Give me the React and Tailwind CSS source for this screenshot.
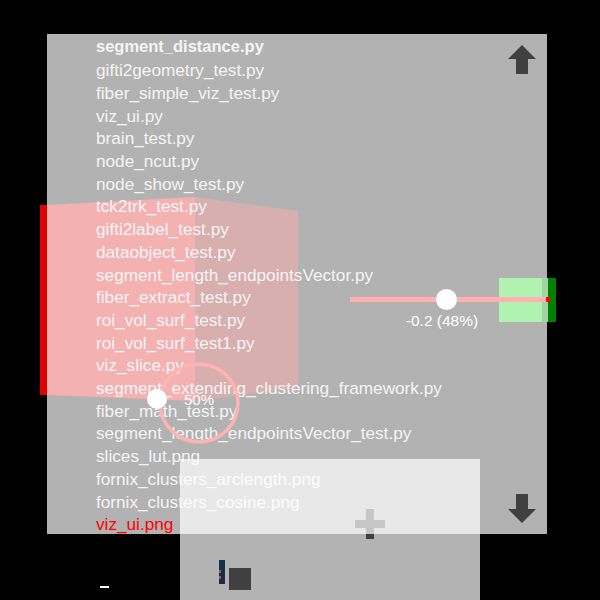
import React from 'react';

const files = [
  'gifti2geometry_test.py',
  'fiber_simple_viz_test.py',
  'viz_ui.py',
  'brain_test.py',
  'node_ncut.py',
  'node_show_test.py',
  'tck2trk_test.py',
  'gifti2label_test.py',
  'dataobject_test.py',
  'segment_length_endpointsVector.py',
  'fiber_extract_test.py',
  'roi_vol_surf_test.py',
  'roi_vol_surf_test1.py',
  'viz_slice.py',
  'segment_extending_clustering_framework.py',
  'fiber_math_test.py',
  'segment_length_endpointsVector_test.py',
  'slices_lut.png',
  'fornix_clusters_arclength.png',
  'fornix_clusters_cosine.png',
];

/** Perspective cube seen from the front, drawn under the file names. */
function Cube() {
  return (
    <svg className="absolute left-[-7px] top-[162px]" width="260" height="212" viewBox="40 196 260 212">
      <polygon points="40,205 47,205 47,395 40,395" fill="#e00000" />
      <polygon points="47,205 195,197 195,401 47,395" fill="#f4b1b1" />
      <polygon points="195,197 298,211 298,388 195,401" fill="#d7afaf" />
    </svg>
  );
}

function ArrowUp() {
  return (
    <svg width="28" height="29" viewBox="0 0 28 29">
      <polygon points="14,0 28,14 20,14 20,29 8,29 8,14 0,14" fill="#404040" />
    </svg>
  );
}

function ArrowDown() {
  return (
    <svg width="28" height="29" viewBox="0 0 28 29">
      <polygon points="8,0 20,0 20,15 28,15 14,29 0,15 8,15" fill="#404040" />
    </svg>
  );
}

export default function App() {
  return (
    <div className="relative w-[600px] h-[600px] overflow-hidden bg-black font-['Liberation_Sans',Arial,sans-serif]">
      <div className="relative ml-[47px] pt-[34px]">
        <div className="relative w-[500px] h-[500px] bg-[#b2b2b2] flex">
          <Cube />
          <ul className="relative z-10 pl-[49px] pt-[2.5px] flex-1 text-[17.2px] leading-[22.7px] text-[#f5f5f5] whitespace-nowrap">
            <li className="relative top-[-1.5px] font-bold text-[16.5px]">segment_distance.py</li>
            {files.map((f) => (
              <li key={f}>{f}</li>
            ))}
            <li className="text-[#ff0000]">viz_ui.png</li>
          </ul>
          <div className="relative z-10 flex flex-col justify-between pt-[11px] pb-[11px] pr-[11px]">
            <ArrowUp />
            <ArrowDown />
          </div>
        </div>
      </div>

      {/* ring slider */}
      <div className="absolute left-[158px] top-[362px] w-[82px] h-[82px] z-20">
        <svg width="82" height="82" viewBox="0 0 82 82" className="absolute inset-0 overflow-visible">
          <circle cx="41" cy="41" r="39" fill="none" stroke="#ffb3b3" strokeWidth="3.5" />
          <circle cx="-1" cy="37" r="10" fill="#ffffff" />
        </svg>
        <span className="absolute left-0 right-0 top-[29px] text-center text-[15px] leading-[18px] text-white">50%</span>
      </div>

      {/* line slider with green box */}
      <div className="absolute left-[499px] top-[278px] w-[57px] h-[44px] flex z-20">
        <div className="w-[43px] bg-[#b0f2b0]" />
        <div className="w-[6px] bg-[#a3d2a3]" />
        <div className="w-[8px] bg-[#008000]" />
      </div>
      <div className="absolute left-[350px] top-[297px] w-[200px] z-20 flex flex-col items-center">
        <div className="relative w-[200px] h-[5px] flex">
          <div className="w-[196px] h-[5px] bg-[#ffb0b0]" />
          <div className="w-[4px] h-[5px] bg-[#ff0000]" />
          <div className="absolute left-[86px] top-[-8px] w-[21px] h-[21px] rounded-full bg-white" />
        </div>
        <span className="mt-[9px] mr-[16px] text-[15.5px] leading-[20px] text-white">-0.2 (48%)</span>
      </div>

      {/* bottom panel */}
      <div className="absolute left-[355px] top-[509px] w-[30px] h-[25px] z-20">
        <div className="absolute left-[11px] top-0 w-[8px] h-[30px] bg-[#404040]" />
        <div className="absolute left-0 top-[11px] w-[30px] h-[8px] bg-[#404040]" />
      </div>
      <div className="absolute left-[180px] top-[459px] w-[300px] h-[141px] bg-white/70 z-30" />
      <div className="absolute left-[366px] top-[534px] w-[8px] h-[5px] bg-[#404040] z-30" />
      <div className="absolute left-[219px] top-[560px] z-30 flex items-start gap-[4px]">
        <div className="relative w-[6px] h-[24px] bg-[#15304a]">
          <div className="absolute left-0 top-[10px] w-[2px] h-[3px] bg-[#c0503a]" />
          <div className="absolute left-0 top-[16px] w-[2px] h-[3px] bg-[#c0503a]" />
        </div>
        <div className="mt-[8px] w-[22px] h-[22px] bg-[#404040]" />
      </div>
      <div className="absolute left-[100px] top-[586px] w-[9px] h-[1.5px] bg-white" />
    </div>
  );
}
